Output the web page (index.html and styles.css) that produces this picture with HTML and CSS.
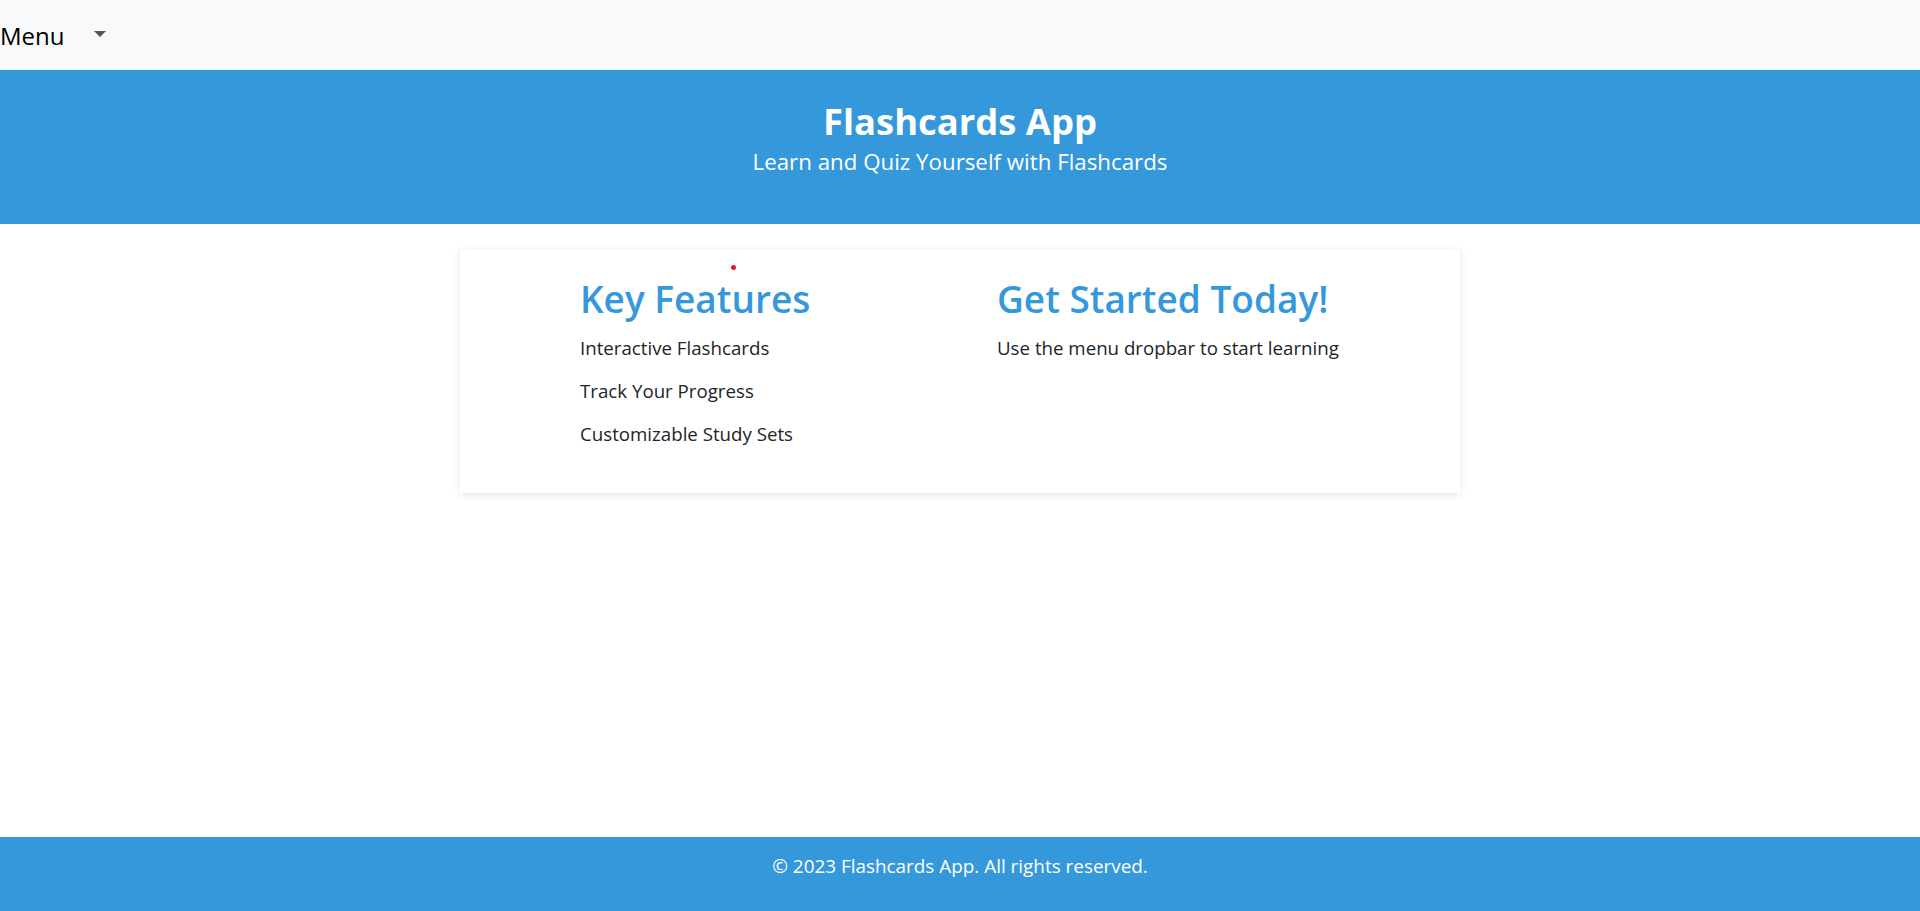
FILE: index.html
```html
<!DOCTYPE html>
<html lang="en">
<head>
<meta charset="utf-8">
<title>Flashcards App</title>
<link rel="stylesheet" href="styles.css">
</head>
<body>
<nav class="navbar">
  <button class="menu-toggle" type="button">Menu<span class="caret"></span></button>
</nav>
<header class="hero">
  <h1 class="hero-title">Flashcards App</h1>
  <p class="hero-subtitle">Learn and Quiz Yourself with Flashcards</p>
</header>
<main class="main">
  <section class="card">
    <div class="col">
      <h2 class="col-title">Key Features</h2>
      <ul class="feature-list">
        <li>Interactive Flashcards</li>
        <li>Track Your Progress</li>
        <li>Customizable Study Sets</li>
      </ul>
    </div>
    <div class="col">
      <h2 class="col-title">Get Started Today!</h2>
      <p class="col-text">Use the menu dropbar to start learning</p>
    </div>
    <span class="dot"></span>
  </section>
</main>
<footer class="footer">
  <p class="footer-text">&copy; 2023 Flashcards App. All rights reserved.</p>
</footer>
</body>
</html>
```

FILE: styles.css
```css
* { box-sizing: border-box; }
html, body { margin: 0; padding: 0; }
body {
  font-family: "Open Sans", "Noto Sans", sans-serif;
  color: #212529;
  background: #fff;
  min-height: 100vh;
  display: flex;
  flex-direction: column;
}
.navbar {
  height: 70px;
  background: #f8f9fa;
  display: flex;
  align-items: center;
}
.menu-toggle {
  border: 0;
  background: transparent;
  padding: 0;
  margin: 0;
  font-family: inherit;
  font-size: 24px;
  color: #000;
  display: flex;
  align-items: center;
  cursor: pointer;
}
.caret {
  display: inline-block;
  margin-left: 29px;
  width: 0;
  height: 0;
  border-left: 6px solid transparent;
  border-right: 6px solid transparent;
  border-top: 6px solid #555;
  margin-top: -2px;
}
.hero {
  background: #3498db;
  color: #fff;
  text-align: center;
  padding: 27px 0 46px;
}
.hero-title {
  margin: 0;
  font-size: 36.4px;
  line-height: 48px;
  font-weight: 700;
}
.hero-subtitle {
  margin: 0;
  font-size: 22.3px;
  line-height: 33px;
}
.main {
  flex: 1;
  padding-top: 25px;
}
.card {
  position: relative;
  width: 1000px;
  margin: 0 auto;
  background: #fff;
  box-shadow: 0 2px 8px rgba(0,0,0,0.1);
  padding: 26px 20px 38px 120px;
  display: grid;
  grid-template-columns: 417px auto;
  align-items: start;
}
.col-title {
  margin: 0 0 3px;
  color: #3498db;
  font-size: 37px;
  line-height: 48px;
  font-weight: 600;
}
.feature-list {
  list-style: none;
  margin: 0;
  padding: 0;
}
.feature-list li {
  font-size: 18.7px;
  line-height: 27px;
  padding: 8px 0;
}
.col-text {
  margin: 0;
  font-size: 18.7px;
  line-height: 27px;
  padding: 8px 0;
}
.dot {
  position: absolute;
  left: 271px;
  top: 16px;
  width: 5px;
  height: 5px;
  border-radius: 50%;
  background: #e31b23;
}
.footer {
  background: #3498db;
  color: #fff;
  text-align: center;
  height: 74px;
  padding-top: 14px;
}
.footer-text {
  margin: 0;
  font-size: 18.9px;
  line-height: 30px;
}
```
